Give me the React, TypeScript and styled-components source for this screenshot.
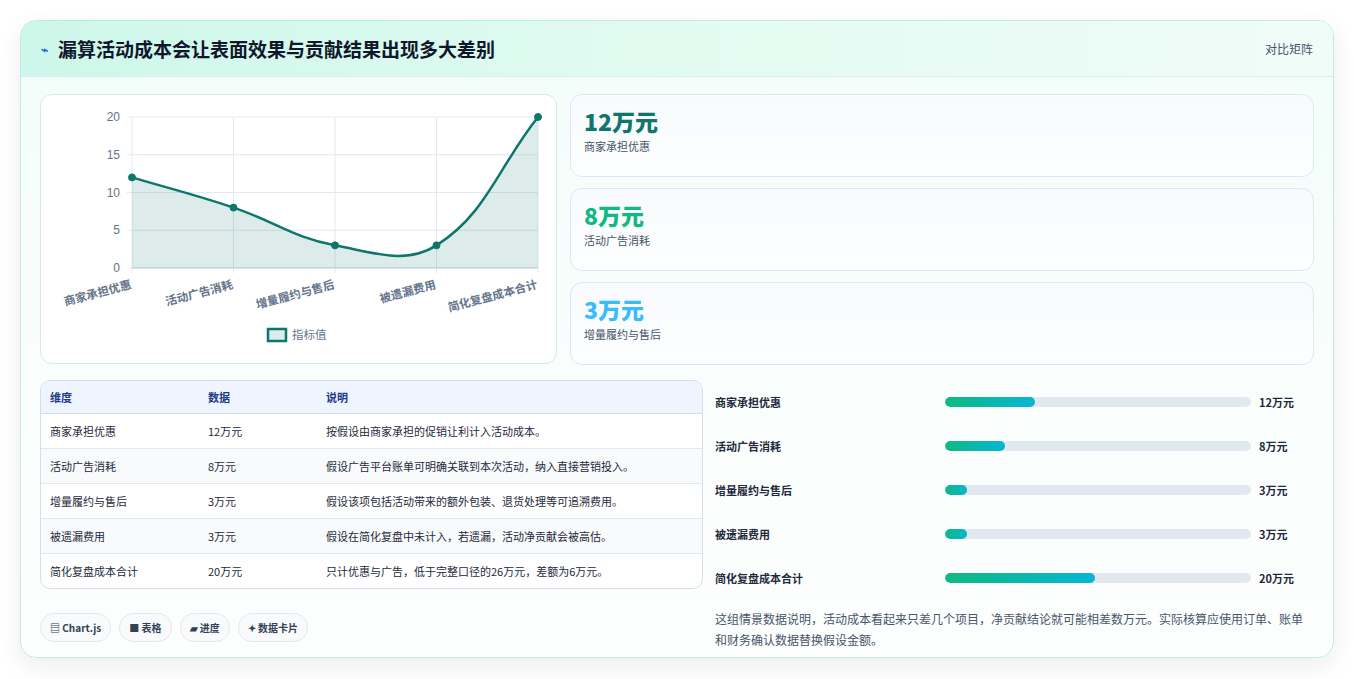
import React from "react"
import styled, { createGlobalStyle } from "styled-components"

const Global = createGlobalStyle`
  body {
    margin: 0;
    background: #f4f5f7;
    font-family: "Noto Sans CJK SC", "Noto Sans", sans-serif;
    color: #1e293b;
  }
`

const Page = styled.div`
  padding: 20px 20px 20px 20px;
  background: #fff;
  height: 679px;
  box-sizing: border-box;
`

const Card = styled.div`
  border: 1px solid #bfeee0;
  border-radius: 16px;
  overflow: hidden;
  background: linear-gradient(180deg, #f2fdf9 0%, #fafefd 60%, #fdfefe 100%);
  box-shadow: 0 8px 24px rgba(15, 23, 42, 0.08);
  height: 638px;
  box-sizing: border-box;
`

const Header = styled.div`
  height: 55px;
  display: flex;
  align-items: center;
  justify-content: space-between;
  padding: 0 20px;
  background: linear-gradient(90deg, #cdf7ea 0%, #e2fbf1 50%, #f0fcf8 100%);
  border-bottom: 1px solid #d6ecf0;
`

const Title = styled.h1`
  margin: 0;
  font-size: 19px;
  font-weight: 700;
  color: #0f172a;
  display: flex;
  align-items: center;
  gap: 10px;
`

const Tag = styled.span`
  font-size: 12px;
  color: #475569;
`

const Body = styled.div`
  padding: 17px 19px 0 19px;
`

const TopRow = styled.div`
  display: grid;
  grid-template-columns: 517px 1fr;
  gap: 13px;
`

const Panel = styled.div`
  background: #fff;
  border: 1px solid #dbe7ef;
  border-radius: 12px;
  height: 270px;
  box-sizing: border-box;
`

const Stats = styled.div`
  display: flex;
  flex-direction: column;
  gap: 11px;
`

const Stat = styled.div`
  height: 83px;
  box-sizing: border-box;
  border: 1px solid #d9e8f3;
  border-radius: 12px;
  background: linear-gradient(180deg, #f8fafd, #fdfeff);
  padding: 10px 13px;
`

const StatValue = styled.div<{ $color: string }>`
  font-size: 23px;
  font-weight: 800;
  color: ${(p) => p.$color};
  line-height: 32px;
`

const StatLabel = styled.div`
  font-size: 11px;
  color: #475569;
  margin-top: 1px;
`

const BottomRow = styled.div`
  display: grid;
  grid-template-columns: 663px 1fr;
  gap: 12px;
  margin-top: 15px;
`

const Table = styled.table`
  width: 100%;
  border-collapse: separate;
  border-spacing: 0;
  border: 1px solid #d4dfeb;
  border-radius: 10px;
  overflow: hidden;
  font-size: 11px;
  background: #fff;
  th {
    background: #eef5ff;
    color: #1e3a8a;
    text-align: left;
    font-weight: 700;
    height: 32px;
    padding: 0 9px;
    border-bottom: 1px solid #d4dfeb;
  }
  td {
    height: 34px;
    padding: 0 9px;
    color: #1e293b;
    border-bottom: 1px solid #e2e8f0;
  }
  tr:nth-child(even) td {
    background: #f8fafc;
  }
  tr:last-child td {
    border-bottom: none;
  }
`

const Chips = styled.div`
  display: flex;
  gap: 8px;
  margin-top: 24px;
`

const Chip = styled.span`
  font-size: 10px;
  font-weight: 600;
  color: #334155;
  border: 1px solid #e2e8f0;
  background: #f8fafc;
  border-radius: 14px;
  padding: 6px 9px;
`

const Bars = styled.div`
  display: flex;
  flex-direction: column;
`

const BarRow = styled.div`
  display: grid;
  grid-template-columns: 222px 306px 1fr;
  gap: 8px;
  align-items: center;
  height: 44px;
  font-size: 11px;
  font-weight: 600;
`

const Track = styled.div`
  height: 10px;
  border-radius: 5px;
  background: #e2e8f0;
  overflow: hidden;
`

const Fill = styled.div`
  height: 100%;
  border-radius: 5px;
  background: linear-gradient(90deg, #10b981, #06b6d4);
`

const Note = styled.p`
  margin: 8px 0 0 0;
  font-size: 12px;
  line-height: 21px;
  color: #475569;
`

const data = [
  { name: "商家承担优惠", v: 12, note: "按假设由商家承担的促销让利计入活动成本。" },
  { name: "活动广告消耗", v: 8, note: "假设广告平台账单可明确关联到本次活动，纳入直接营销投入。" },
  { name: "增量履约与售后", v: 3, note: "假设该项包括活动带来的额外包装、退货处理等可追溯费用。" },
  { name: "被遗漏费用", v: 3, note: "假设在简化复盘中未计入，若遗漏，活动净贡献会被高估。" },
  { name: "简化复盘成本合计", v: 20, note: "只计优惠与广告，低于完整口径的26万元，差额为6万元。" },
]

const Chart = () => {
  const x0 = 91, x1 = 497, y0 = 22, y1 = 173
  const pts = data.map((d, i) => ({
    x: x0 + ((x1 - x0) * i) / 4,
    y: y1 - ((y1 - y0) * d.v) / 20,
  }))
  const t = 0.4
  const cps = pts.map((p, i) => {
    const prev = pts[i - 1] || p
    const next = pts[i + 1] || p
    const d01 = Math.hypot(p.x - prev.x, p.y - prev.y)
    const d12 = Math.hypot(next.x - p.x, next.y - p.y)
    const s01 = d01 / (d01 + d12 || 1)
    const s12 = d12 / (d01 + d12 || 1)
    return {
      px: p.x - t * s01 * (next.x - prev.x),
      py: p.y - t * s01 * (next.y - prev.y),
      nx: p.x + t * s12 * (next.x - prev.x),
      ny: p.y + t * s12 * (next.y - prev.y),
    }
  })
  let d = `M${pts[0].x},${pts[0].y}`
  for (let i = 1; i < pts.length; i++) {
    d += ` C${cps[i - 1].nx},${cps[i - 1].ny} ${cps[i].px},${cps[i].py} ${pts[i].x},${pts[i].y}`
  }
  const area = `${d} L${x1},${y1} L${x0},${y1} Z`
  return (
    <svg width="515" height="268" style={{ display: "block" }}>
      {[0, 5, 10, 15, 20].map((v) => {
        const y = y1 - ((y1 - y0) * v) / 20
        return (
          <g key={v}>
            <line x1={x0 - 5} x2={x1} y1={y} y2={y} stroke="#e2e8f0" />
            <text x={x0 - 12} y={y + 4} fontSize="12" fill="#64748b" textAnchor="end" fontFamily="Liberation Sans, sans-serif">{v}</text>
          </g>
        )
      })}
      {pts.map((p, i) => (
        <line key={i} x1={p.x} x2={p.x} y1={y0} y2={y1 + 5} stroke="#e2e8f0" />
      ))}
      <line x1={x0} x2={x1} y1={y1} y2={y1} stroke="#cbd5e1" />
      <path d={area} fill="rgba(15,118,110,0.14)" />
      <path d={d} fill="none" stroke="#0f766e" strokeWidth="2.5" />
      {pts.map((p, i) => (
        <circle key={i} cx={p.x} cy={p.y} r="3.5" fill="#0f766e" stroke="#0f766e" />
      ))}
      {data.map((dd, i) => (
        <text key={i} x={pts[i].x} y={y1 + 20} fontSize="11.5" fontWeight="600" fill="#64748b" textAnchor="end"
          transform={`rotate(-15 ${pts[i].x} ${y1 + 20})`} fontFamily="Noto Sans CJK SC, sans-serif">{dd.name}</text>
      ))}
      <rect x="227" y="234" width="18" height="12" fill="rgba(15,118,110,0.14)" stroke="#0f766e" strokeWidth="2.5" />
      <text x="251" y="244" fontSize="11.5" fill="#64748b" fontFamily="Noto Sans CJK SC, sans-serif">指标值</text>
    </svg>
  )
}

const statColors = ["#0f766e", "#10b981", "#38bdf8"]

export default function App() {
  return (
    <Page>
      <Global />
      <Card>
        <Header>
          <Title>
            <span style={{ color: "#2563eb", fontSize: 12 }}>⌁</span>
            漏算活动成本会让表面效果与贡献结果出现多大差别
          </Title>
          <Tag>对比矩阵</Tag>
        </Header>
        <Body>
          <TopRow>
            <Panel>
              <Chart />
            </Panel>
            <Stats>
              {data.slice(0, 3).map((d, i) => (
                <Stat key={d.name}>
                  <StatValue $color={statColors[i]}>{d.v}万元</StatValue>
                  <StatLabel>{d.name}</StatLabel>
                </Stat>
              ))}
            </Stats>
          </TopRow>
          <BottomRow>
            <div>
              <Table>
                <thead>
                  <tr>
                    <th style={{ width: 140 }}>维度</th>
                    <th style={{ width: 100 }}>数据</th>
                    <th>说明</th>
                  </tr>
                </thead>
                <tbody>
                  {data.map((d) => (
                    <tr key={d.name}>
                      <td>{d.name}</td>
                      <td>{d.v}万元</td>
                      <td>{d.note}</td>
                    </tr>
                  ))}
                </tbody>
              </Table>
              <Chips>
                <Chip>▤ Chart.js</Chip>
                <Chip>■ 表格</Chip>
                <Chip>▰ 进度</Chip>
                <Chip>✦ 数据卡片</Chip>
              </Chips>
            </div>
            <div>
              <Bars>
                {data.map((d) => (
                  <BarRow key={d.name}>
                    <span>{d.name}</span>
                    <Track>
                      <Fill style={{ width: `${(d.v / 20) * 49}%` }} />
                    </Track>
                    <span>{d.v}万元</span>
                  </BarRow>
                ))}
              </Bars>
              <Note>
                这组情景数据说明，活动成本看起来只差几个项目，净贡献结论就可能相差数万元。实际核算应使用订单、账单和财务确认数据替换假设金额。
              </Note>
            </div>
          </BottomRow>
        </Body>
      </Card>
    </Page>
  )
}
